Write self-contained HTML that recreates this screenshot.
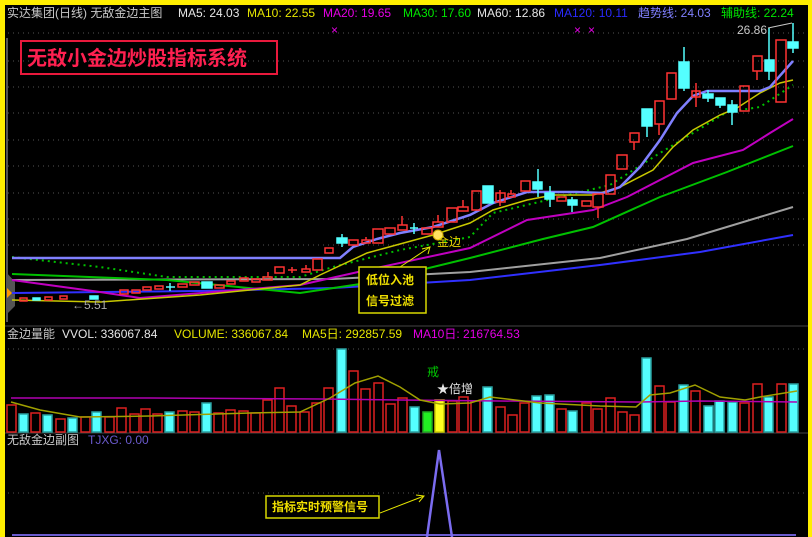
<!DOCTYPE html>
<html><head><meta charset="utf-8"><style>
html,body{margin:0;padding:0;background:#000;}
svg{display:block}
text{font-family:"Liberation Sans","Noto Sans CJK SC",sans-serif;font-size:12px}
</style></head><body>
<svg width="812" height="537" viewBox="0 0 812 537" xmlns="http://www.w3.org/2000/svg">
<rect width="812" height="537" fill="#000"/>
<!-- yellow frame -->
<rect x="0" y="0" width="812" height="5" fill="#ffee00"/>
<rect x="0" y="0" width="5" height="537" fill="#ffee00"/>
<rect x="808" y="0" width="4" height="537" fill="#ffee00"/>
<!-- panel borders -->
<line x1="7" y1="38" x2="7" y2="322" stroke="#555" stroke-width="2"/>
<line x1="5" y1="326" x2="808" y2="326" stroke="#444"/>
<line x1="5" y1="433" x2="808" y2="433" stroke="#444"/>
<!-- grid -->
<g stroke="#555" stroke-dasharray="1,4">
<line x1="8" y1="33" x2="806" y2="33"/><line x1="8" y1="61" x2="806" y2="61"/><line x1="8" y1="87" x2="806" y2="87"/><line x1="8" y1="113" x2="806" y2="113"/><line x1="8" y1="140" x2="806" y2="140"/><line x1="8" y1="166" x2="806" y2="166"/><line x1="8" y1="193" x2="806" y2="193"/><line x1="8" y1="219" x2="806" y2="219"/><line x1="8" y1="245" x2="806" y2="245"/>
<line x1="8" y1="349" x2="806" y2="349"/><line x1="8" y1="493" x2="806" y2="493"/>
</g>
<!-- header -->
<text x="7" y="17" fill="#c8c8c8">实达集团(日线) 无敌金边主图</text>
<text x="178" y="17" fill="#e6e6e6">MA5: 24.03</text>
<text x="247" y="17" fill="#e6e600">MA10: 22.55</text>
<text x="323" y="17" fill="#e600e6">MA20: 19.65</text>
<text x="403" y="17" fill="#00e600">MA30: 17.60</text>
<text x="477" y="17" fill="#e6e6e6">MA60: 12.86</text>
<text x="554" y="17" fill="#2a2aff">MA120: 10.11</text>
<text x="638" y="17" fill="#8080ff">趋势线: 24.03</text>
<text x="721" y="17" fill="#00e600">辅助线: 22.24</text>
<text x="331" y="34" fill="#e600e6" font-size="10">×</text>
<text x="574" y="34" fill="#e600e6" font-size="10">×</text>
<text x="588" y="34" fill="#e600e6" font-size="10">×</text>
<!-- title box -->
<rect x="21" y="41" width="256" height="33" fill="none" stroke="#e8193c" stroke-width="2"/>
<text x="27" y="65" fill="#ff2050" style="font-size:20px;font-weight:bold">无敌小金边炒股指标系统</text>
<!-- left marker -->
<polygon points="6,272 15,282 15,306 6,315" fill="#555"/>
<polygon points="7,288 12,293 7,298" fill="#ff9900"/>
<!-- MA lines -->
<polyline fill="none" stroke="#3030ff" stroke-width="2" points="12,293 200,291 333,288 470,280 600,265 700,252 793,235"/>
<polyline fill="none" stroke="#a0a0a0" stroke-width="2" points="12,280 333,279 470,272 600,258 687,239 793,207"/>
<polyline fill="none" stroke="#00c000" stroke-width="2" points="12,274 167,280 300,293 367,283 470,258 543,239 593,227 660,197 727,172 793,146"/>
<polyline fill="none" stroke="#c000c0" stroke-width="2" points="12,280 100,292 140,298 300,285 367,270 470,248 527,220 593,210 627,197 693,163 743,150 770,133 793,119"/>
<polyline fill="none" stroke="#00c000" stroke-width="2" stroke-dasharray="2,4" points="12,257 100,267 167,277 300,277 333,267 400,250 470,237 493,213 560,197 610,185 660,153 693,133 727,112 760,107 793,85"/>
<polyline fill="none" stroke="#c8c800" stroke-width="1.5" points="12,300 100,302 200,295 300,285 320,275 367,253 433,235 470,223 493,210 527,200 553,195 593,195 620,187 653,170 673,147 693,130 720,115 737,108 760,93 780,83 793,80"/>
<polyline fill="none" stroke="#8080ff" stroke-width="2.5" points="12,258 340,258 353,247 377,239 400,233 433,227 470,215 493,203 527,192 577,192 603,193 620,187 640,167 660,140 677,113 693,96 707,91 760,91 770,87 793,61"/>
<!-- candles -->
<g stroke="#ff3232" fill="none" stroke-width="1.5">
<rect x="20" y="298" width="7" height="3"/><rect x="45" y="297" width="7" height="3"/><rect x="60" y="296" width="7" height="3"/>
<rect x="120" y="290" width="8" height="4"/><rect x="132" y="290" width="8" height="3"/><rect x="143" y="287" width="8" height="3"/><rect x="155" y="286" width="8" height="3"/>
<rect x="178" y="284" width="9" height="3"/><rect x="190" y="282" width="9" height="3"/><rect x="215" y="285" width="9" height="3"/><rect x="227" y="281" width="8" height="3"/><rect x="240" y="278" width="8" height="3"/><rect x="252" y="279" width="8" height="3"/><rect x="263" y="277" width="9" height="3"/><line x1="268" y1="272" x2="268" y2="277"/>
<rect x="275" y="267" width="9" height="6"/><line x1="288" y1="270" x2="297" y2="270"/><line x1="292" y1="267" x2="292" y2="273"/>
<rect x="302" y="269" width="8" height="3"/><line x1="306" y1="265" x2="306" y2="269"/>
<rect x="313" y="259" width="9" height="11"/><rect x="325" y="248" width="8" height="5"/>
<rect x="349" y="240" width="9" height="5"/><rect x="362" y="240" width="8" height="3"/><line x1="366" y1="237" x2="366" y2="240"/>
<rect x="373" y="229" width="10" height="14"/><rect x="385" y="228" width="10" height="6"/><rect x="398" y="225" width="9" height="5"/><line x1="402" y1="216" x2="402" y2="225"/>
<rect x="422" y="228" width="10" height="6"/><rect x="433" y="222" width="10" height="5"/><line x1="438" y1="215" x2="438" y2="222"/>
<rect x="447" y="208" width="10" height="14"/><rect x="458" y="207" width="10" height="4"/><line x1="463" y1="200" x2="463" y2="207"/>
<rect x="472" y="191" width="9" height="19"/><rect x="496" y="193" width="9" height="9"/><line x1="500" y1="190" x2="500" y2="206"/>
<rect x="508" y="194" width="7" height="3"/><line x1="511" y1="190" x2="511" y2="194"/>
<rect x="521" y="181" width="9" height="10"/><rect x="557" y="197" width="9" height="4"/><rect x="582" y="201" width="9" height="5"/>
<rect x="593" y="194" width="10" height="13"/><line x1="598" y1="207" x2="598" y2="218"/>
<rect x="606" y="175" width="9" height="19"/><rect x="617" y="155" width="10" height="14"/>
<rect x="630" y="133" width="9" height="9"/><line x1="634" y1="142" x2="634" y2="150"/>
<rect x="655" y="101" width="9" height="23"/><line x1="659" y1="124" x2="659" y2="135"/>
<rect x="667" y="73" width="9" height="26"/>
<rect x="692" y="91" width="8" height="6"/><line x1="696" y1="83" x2="696" y2="107"/>
<rect x="740" y="86" width="9" height="25"/>
<rect x="753" y="56" width="9" height="15"/><line x1="757" y1="71" x2="757" y2="80"/>
<rect x="776" y="40" width="10" height="62"/>
</g>
<g fill="#54ffff" stroke="#54ffff" stroke-width="1.5">
<rect x="33" y="298" width="7" height="2"/><rect x="90" y="296" width="8" height="3"/>
<line x1="166" y1="287" x2="175" y2="287"/><line x1="170" y1="283" x2="170" y2="291"/>
<rect x="202" y="282" width="10" height="6"/>
<rect x="337" y="238" width="10" height="5"/><line x1="342" y1="234" x2="342" y2="247"/>
<line x1="410" y1="228" x2="418" y2="228"/><line x1="414" y1="223" x2="414" y2="234"/>
<rect x="483" y="186" width="10" height="17"/>
<rect x="533" y="182" width="9" height="7"/><line x1="538" y1="169" x2="538" y2="197"/>
<rect x="545" y="193" width="9" height="6"/><line x1="550" y1="186" x2="550" y2="207"/>
<rect x="568" y="200" width="9" height="5"/><line x1="572" y1="197" x2="572" y2="212"/>
<rect x="642" y="109" width="10" height="17"/><line x1="647" y1="126" x2="647" y2="137"/>
<rect x="679" y="62" width="10" height="26"/><line x1="684" y1="47" x2="684" y2="91"/>
<rect x="703" y="94" width="10" height="4"/><line x1="708" y1="90" x2="708" y2="102"/>
<rect x="716" y="98" width="9" height="7"/><line x1="720" y1="105" x2="720" y2="108"/>
<rect x="728" y="105" width="9" height="7"/><line x1="732" y1="100" x2="732" y2="125"/>
<rect x="765" y="60" width="9" height="11"/><line x1="769" y1="28" x2="769" y2="80"/>
<rect x="788" y="42" width="10" height="6"/><line x1="793" y1="23" x2="793" y2="53"/>
</g>
<text x="737" y="34" fill="#c8c8c8" font-size="11">26.86</text>
<line x1="768" y1="28" x2="792" y2="23" stroke="#c8c8c8"/>
<text x="72" y="309" fill="#aaa" font-size="11">←5.51</text>
<!-- signal -->
<circle cx="438" cy="235" r="5" fill="#ffe060" stroke="#c8a000"/>
<text x="437" y="246" fill="#e6d200" font-size="12">金边</text>
<line x1="400" y1="267" x2="430" y2="247" stroke="#e6e600"/>
<polyline points="422,249 430,247 428,254" fill="none" stroke="#e6e600"/>
<rect x="359" y="267" width="67" height="46" fill="#000" stroke="#d8d800" stroke-width="1.5"/>
<text x="366" y="284" fill="#f0e000" style="font-weight:bold">低位入池</text>
<text x="366" y="305" fill="#f0e000" style="font-weight:bold">信号过滤</text>
<!-- volume panel -->
<text x="7" y="338" fill="#c8c8c8">金边量能</text>
<text x="62" y="338" fill="#e6e6e6">VVOL: 336067.84</text>
<text x="174" y="338" fill="#e6e600">VOLUME: 336067.84</text>
<text x="302" y="338" fill="#e6e600">MA5日: 292857.59</text>
<text x="413" y="338" fill="#e600e6">MA10日: 216764.53</text>
<g stroke-width="1.5">
<g fill="none" stroke="#dd2020">
<rect x="7" y="405" width="9" height="27"/><rect x="31" y="413" width="9" height="19"/><rect x="56" y="419" width="9" height="13"/><rect x="81" y="417" width="9" height="15"/><rect x="105" y="417" width="9" height="15"/><rect x="117" y="408" width="9" height="24"/><rect x="130" y="414" width="9" height="18"/><rect x="141" y="409" width="9" height="23"/><rect x="153" y="414" width="9" height="18"/><rect x="178" y="411" width="9" height="21"/><rect x="190" y="412" width="9" height="20"/><rect x="214" y="413" width="9" height="19"/><rect x="226" y="410" width="9" height="22"/><rect x="239" y="411" width="9" height="21"/><rect x="251" y="413" width="9" height="19"/><rect x="263" y="400" width="9" height="32"/><rect x="275" y="388" width="9" height="44"/><rect x="287" y="406" width="9" height="26"/><rect x="300" y="412" width="9" height="20"/><rect x="312" y="403" width="9" height="29"/><rect x="324" y="388" width="9" height="44"/><rect x="349" y="371" width="9" height="61"/><rect x="361" y="389" width="9" height="43"/><rect x="374" y="383" width="9" height="49"/><rect x="386" y="404" width="9" height="28"/><rect x="398" y="398" width="9" height="34"/><rect x="448" y="401" width="9" height="31"/><rect x="459" y="397" width="9" height="35"/><rect x="471" y="401" width="9" height="31"/><rect x="496" y="407" width="9" height="25"/><rect x="508" y="415" width="9" height="17"/><rect x="520" y="403" width="9" height="29"/><rect x="557" y="409" width="9" height="23"/><rect x="582" y="403" width="9" height="29"/><rect x="593" y="409" width="9" height="23"/><rect x="606" y="398" width="9" height="34"/><rect x="618" y="412" width="9" height="20"/><rect x="630" y="415" width="9" height="17"/><rect x="655" y="386" width="9" height="46"/><rect x="666" y="402" width="9" height="30"/><rect x="691" y="391" width="9" height="41"/><rect x="740" y="403" width="9" height="29"/><rect x="753" y="384" width="9" height="48"/><rect x="777" y="384" width="9" height="48"/>
</g>
<g fill="#54ffff" stroke="#2aa0a0">
<rect x="19" y="414" width="9" height="18"/><rect x="43" y="415" width="9" height="17"/><rect x="68" y="418" width="9" height="14"/><rect x="92" y="412" width="9" height="20"/><rect x="165" y="412" width="9" height="20"/><rect x="202" y="403" width="9" height="29"/><rect x="337" y="349" width="9" height="83"/><rect x="410" y="407" width="9" height="25"/><rect x="483" y="387" width="9" height="45"/><rect x="532" y="396" width="9" height="36"/><rect x="545" y="395" width="9" height="37"/><rect x="568" y="411" width="9" height="21"/><rect x="642" y="358" width="9" height="74"/><rect x="679" y="385" width="9" height="47"/><rect x="704" y="406" width="9" height="26"/><rect x="715" y="401" width="9" height="31"/><rect x="728" y="402" width="9" height="30"/><rect x="764" y="397" width="9" height="35"/><rect x="789" y="384" width="9" height="48"/>
</g>
<rect x="423" y="412" width="9" height="20" fill="#22ee22" stroke="#22aa22"/>
<rect x="435" y="400" width="9" height="32" fill="#ffff20" stroke="#cccc00"/>
</g>
<polyline fill="none" stroke="#b000b0" stroke-width="1.5" points="11,398 150,398 321,399 400,400 500,401 640,402 700,401 797,402"/>
<polyline fill="none" stroke="#a0a000" stroke-width="1.5" points="11,402 40,410 80,417 150,416 250,413 300,412 330,398 355,383 378,376 400,387 420,400 440,404 470,403 490,397 540,403 600,406 636,407 650,395 670,393 695,385 720,397 745,400 760,397 797,391"/>
<text x="427" y="376" fill="#00c800" font-size="11">戒</text>
<text x="437" y="393" fill="#e6e6e6">★倍增</text>
<!-- sub panel -->
<text x="7" y="444" fill="#c8c8c8">无敌金边副图</text>
<text x="88" y="444" fill="#6a5acd">TJXG: 0.00</text>
<line x1="12" y1="535" x2="796" y2="535" stroke="#6a5acd" stroke-width="2"/>
<polyline fill="none" stroke="#7b6cf0" stroke-width="2.5" points="427,537 439,450 452,537"/>
<rect x="266" y="496" width="113" height="22" fill="#000" stroke="#d8d800" stroke-width="1.5"/>
<text x="272" y="511" fill="#f0e000" style="font-weight:bold">指标实时预警信号</text>
<line x1="380" y1="513" x2="424" y2="496" stroke="#e6e600"/>
<polyline points="416,495 424,496 419,502" fill="none" stroke="#e6e600"/>
</svg>
</body></html>
